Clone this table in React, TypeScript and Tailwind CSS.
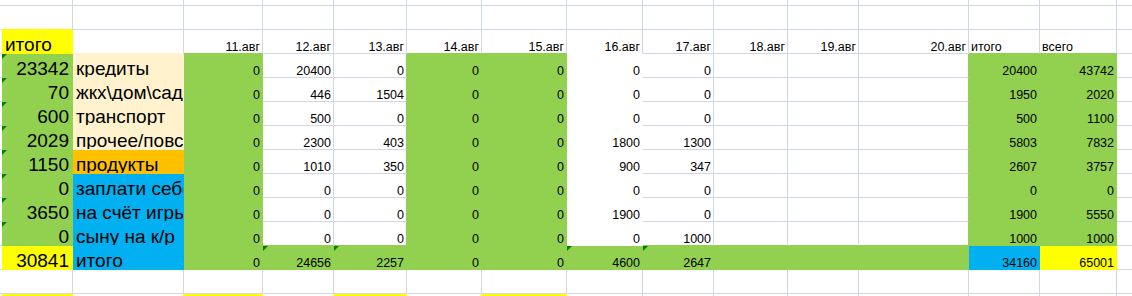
import React from 'react';

type Fill = 'y' | 'g' | 't' | 'o' | 'b' | 'w';

interface Cell {
  text?: string;
  align?: 'l' | 'r';
  big?: boolean;
  fill?: Fill;
  mark?: boolean;
}

const BG: Record<Fill, string> = {
  y: 'bg-[#ffff00]',
  g: 'bg-[#92d050]',
  t: 'bg-[#fff2cc]',
  o: 'bg-[#ffc000]',
  b: 'bg-[#00b0f0]',
  w: 'bg-white',
};

const BORDER_R: Record<Fill | 'grid', string> = {
  y: 'border-r-[#ffff00]',
  g: 'border-r-[#92d050]',
  t: 'border-r-[#fff2cc]',
  o: 'border-r-[#ffc000]',
  b: 'border-r-[#00b0f0]',
  w: 'border-r-white',
  grid: 'border-r-[#d0d7e5]',
};

const BORDER_B: Record<Fill | 'grid', string> = {
  y: 'border-b-[#ffff00]',
  g: 'border-b-[#92d050]',
  t: 'border-b-[#fff2cc]',
  o: 'border-b-[#ffc000]',
  b: 'border-b-[#00b0f0]',
  w: 'border-b-white',
  grid: 'border-b-[#d0d7e5]',
};

const COLS = 16;
const empty = (): Cell[] => Array.from({ length: COLS }, () => ({}));

const dates = ['11', '12', '13', '14', '15', '16', '17', '18', '19', '20'].map((d) => `${d}.авг`);

// заливка колонок 11.авг..17.авг в строках с данными
const dayFills: (Fill | undefined)[] = ['g', undefined, undefined, 'g', 'g', 'w', undefined];

const items: { total: string; name: string; fill: Fill; days: string[]; sum: string; all: string }[] = [
  { total: '23342', name: 'кредиты', fill: 't', days: ['0', '20400', '0', '0', '0', '0', '0'], sum: '20400', all: '43742' },
  { total: '70', name: 'жкх\\дом\\сад', fill: 't', days: ['0', '446', '1504', '0', '0', '0', '0'], sum: '1950', all: '2020' },
  { total: '600', name: 'транспорт', fill: 't', days: ['0', '500', '0', '0', '0', '0', '0'], sum: '500', all: '1100' },
  { total: '2029', name: 'прочее/повседневное', fill: 't', days: ['0', '2300', '403', '0', '0', '1800', '1300'], sum: '5803', all: '7832' },
  { total: '1150', name: 'продукты', fill: 'o', days: ['0', '1010', '350', '0', '0', '900', '347'], sum: '2607', all: '3757' },
  { total: '0', name: 'заплати себе', fill: 'b', days: ['0', '0', '0', '0', '0', '0', '0'], sum: '0', all: '0' },
  { total: '3650', name: 'на счёт игры', fill: 'b', days: ['0', '0', '0', '0', '0', '1900', '0'], sum: '1900', all: '5550' },
  { total: '0', name: 'сыну на к/р', fill: 'b', days: ['0', '0', '0', '0', '0', '0', '1000'], sum: '1000', all: '1000' },
];

function buildRows(): Cell[][] {
  const rows: Cell[][] = [empty(), empty()];

  const header = empty();
  header[1] = { text: 'итого', align: 'l', big: true, fill: 'y' };
  dates.forEach((d, i) => (header[3 + i] = { text: d, align: 'r' }));
  header[13] = { text: 'итого', align: 'l' };
  header[14] = { text: 'всего', align: 'l' };
  rows.push(header);

  items.forEach((it) => {
    const row = empty();
    row[1] = { text: it.total, align: 'r', big: true, fill: 'g', mark: true };
    row[2] = { text: it.name, align: 'l', big: true, fill: it.fill };
    it.days.forEach((v, i) => (row[3 + i] = { text: v, align: 'r', fill: dayFills[i] }));
    row[13] = { text: it.sum, align: 'r', fill: 'g' };
    row[14] = { text: it.all, align: 'r', fill: 'g' };
    rows.push(row);
  });

  const total = empty();
  total[1] = { text: '30841', align: 'r', big: true, fill: 'y' };
  total[2] = { text: 'итого', align: 'l', big: true, fill: 'b' };
  ['0', '24656', '2257', '0', '0', '4600', '2647'].forEach((v, i) => {
    total[3 + i] = { text: v, align: 'r', fill: 'g', mark: [1, 2, 5, 6].includes(i) };
  });
  total[10] = { fill: 'g' };
  total[11] = { fill: 'g' };
  total[12] = { fill: 'g' };
  total[13] = { text: '34160', align: 'r', fill: 'b' };
  total[14] = { text: '65001', align: 'r', fill: 'y' };
  rows.push(total);

  rows.push(empty());

  const last = empty();
  [1, 3, 5, 7].forEach((c) => (last[c] = { fill: 'y' }));
  rows.push(last);

  return rows;
}

const rows = buildRows();

function cellClass(r: number, c: number): string {
  const cell = rows[r][c];
  const cls = ['relative flex items-end overflow-hidden whitespace-nowrap text-black'];

  if (cell.fill) cls.push(BG[cell.fill]);

  // сетка прячется под заливкой — как в Excel
  if (c > 0) {
    const right = c + 1 < COLS ? rows[r][c + 1].fill : undefined;
    cls.push('border-r', BORDER_R[cell.fill ?? right ?? 'grid']);
  }
  const below = r + 1 < rows.length && r !== rows.length - 2 ? rows[r + 1][c].fill : undefined;
  cls.push('border-b', BORDER_B[cell.fill ?? below ?? 'grid']);

  if (cell.big) cls.push('text-[19px] leading-[17px]');
  else cls.push('text-[12.5px] leading-none');

  if (cell.align === 'r') cls.push('justify-end', cell.big ? 'pr-[3px]' : 'pr-[2px]');
  else cls.push(cell.big ? 'pl-[3px]' : 'pl-[2px]');

  return cls.join(' ');
}

export default function App() {
  return (
    <div className="w-[1132px] h-[296px] overflow-hidden bg-white [font-family:'Liberation_Sans',Arial,sans-serif]">
      <div className="grid grid-cols-[2px_71px_111px_79px_71px_73px_75px_85px_76px_71px_74px_71px_110px_71px_77px_80px] grid-rows-[6px_repeat(13,24px)]">
        {rows.map((row, r) =>
          row.map((cell, c) => (
            <div key={`${r}-${c}`} className={cellClass(r, c)}>
              {cell.mark && (
                <span className="absolute top-0 left-0 w-0 h-0 border-t-[5px] border-r-[5px] border-t-[#008000] border-r-transparent" />
              )}
              {cell.text && <span>{cell.text}</span>}
            </div>
          ))
        )}
      </div>
    </div>
  );
}
